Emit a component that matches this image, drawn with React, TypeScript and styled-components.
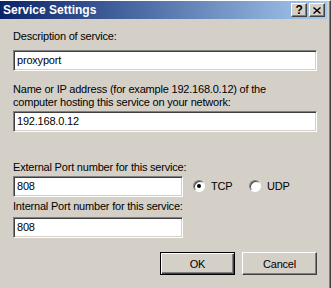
import React from 'react';
import styled, { createGlobalStyle } from 'styled-components';

const Global = createGlobalStyle`
    html, body {
        margin: 0;
        padding: 0;
        background: #D4D0C8;
        overflow: hidden;
    }
`;

const Window = styled.div`
    width: 331px;
    height: 288px;
    box-sizing: border-box;
    background: #D4D0C8;
    border-top: 1px solid #FFFFFF;
    border-right: 1px solid #404040;
    box-shadow: inset -1px 0 #808080;
    padding-right: 3px;
    font-family: "Liberation Sans", Arial, sans-serif;
    font-size: 11px;
    letter-spacing: -0.2px;
    color: #000;
    display: flex;
    flex-direction: column;
`;

const TitleBar = styled.div`
    height: 18px;
    display: flex;
    align-items: center;
    justify-content: space-between;
    padding: 0 2px 0 3px;
    background: linear-gradient(to right, #0A246A, #A6CAF0);
`;

const Title = styled.span`
    color: #FFFFFF;
    font-weight: bold;
    font-size: 12px;
    letter-spacing: 0;
`;

const CaptionButtons = styled.div`
    display: flex;
    gap: 2px;
`;

const CaptionButton = styled.div`
    width: 16px;
    height: 14px;
    box-sizing: border-box;
    background: #D4D0C8;
    border: 1px solid;
    border-color: #FFFFFF #404040 #404040 #FFFFFF;
    box-shadow: inset -1px -1px #808080, inset 1px 1px #D4D0C8;
    display: flex;
    align-items: center;
    justify-content: center;
    font-weight: bold;
    font-size: 12px;
    line-height: 12px;
`;

const Body = styled.div`
    padding: 11px 0 0 13px;
    display: flex;
    flex-direction: column;
`;

const Label = styled.div<{ $gap: number }>`
    line-height: 13px;
    margin-top: ${p => p.$gap}px;
`;

const TextBox = styled.div<{ $width: number; $gap: number }>`
    width: ${p => p.$width}px;
    height: 21px;
    box-sizing: border-box;
    margin-top: ${p => p.$gap}px;
    background: #FFFFFF;
    border: 1px solid;
    border-color: #808080 #FFFFFF #FFFFFF #808080;
    box-shadow: inset 1px 1px #404040, inset -1px -1px #D4D0C8;
    padding: 3px 0 0 3px;
    line-height: 13px;
    white-space: nowrap;
`;

const PortRow = styled.div`
    display: flex;
    align-items: flex-end;
`;

const RadioGroup = styled.div`
    display: flex;
    align-items: center;
    margin: 0 0 5px 10px;
`;

const RadioOption = styled.label`
    display: flex;
    align-items: center;
    gap: 6px;
    width: 56px;
`;

const RadioCircle = styled.span<{ $checked?: boolean }>`
    width: 12px;
    height: 12px;
    box-sizing: border-box;
    border-radius: 50%;
    background: #FFFFFF;
    border: 1px solid;
    border-color: #808080 #FFFFFF #FFFFFF #808080;
    box-shadow: inset 1px 1px #404040;
    display: flex;
    align-items: center;
    justify-content: center;
    &::after {
        content: '';
        width: 4px;
        height: 4px;
        border-radius: 50%;
        background: ${p => (p.$checked ? '#000' : 'transparent')};
    }
`;

const ButtonRow = styled.div`
    display: flex;
    justify-content: flex-end;
    gap: 7px;
    margin-top: 14px;
    padding-right: 10px;
`;

const Button = styled.div<{ $default?: boolean }>`
    width: 75px;
    height: 23px;
    box-sizing: border-box;
    display: flex;
    align-items: center;
    justify-content: center;
    background: #D4D0C8;
    border: 1px solid;
    border-color: ${p => (p.$default ? '#000' : '#FFFFFF #404040 #404040 #FFFFFF')};
    box-shadow: ${p =>
        p.$default
            ? 'inset 1px 1px #FFFFFF, inset -1px -1px #404040, inset -2px -2px #808080'
            : 'inset -1px -1px #808080, inset 1px 1px #D4D0C8'};
`;

const CloseGlyph = () => (
    <svg width="8" height="7" viewBox="0 0 8 7">
        <path d="M0.5 0.5 L7.5 6.5 M7.5 0.5 L0.5 6.5" stroke="#000" strokeWidth="1.4" />
    </svg>
);

export default function App() {
    return (
        <>
            <Global />
            <Window>
                <TitleBar>
                    <Title>Service Settings</Title>
                    <CaptionButtons>
                        <CaptionButton>?</CaptionButton>
                        <CaptionButton><CloseGlyph /></CaptionButton>
                    </CaptionButtons>
                </TitleBar>
                <Body>
                    <Label $gap={0}>Description of service:</Label>
                    <TextBox $width={304} $gap={7}>proxyport</TextBox>
                    <Label $gap={12}>
                        Name or IP address (for example 192.168.0.12) of the<br />
                        computer hosting this service on your network:
                    </Label>
                    <TextBox $width={304} $gap={2}>192.168.0.12</TextBox>
                    <Label $gap={29}>External Port number for this service:</Label>
                    <PortRow>
                        <TextBox $width={170} $gap={2}>808</TextBox>
                        <RadioGroup>
                            <RadioOption><RadioCircle $checked />TCP</RadioOption>
                            <RadioOption><RadioCircle />UDP</RadioOption>
                        </RadioGroup>
                    </PortRow>
                    <Label $gap={3}>Internal Port number for this service:</Label>
                    <TextBox $width={170} $gap={4}>808</TextBox>
                    <ButtonRow>
                        <Button $default>OK</Button>
                        <Button>Cancel</Button>
                    </ButtonRow>
                </Body>
            </Window>
        </>
    );
}
